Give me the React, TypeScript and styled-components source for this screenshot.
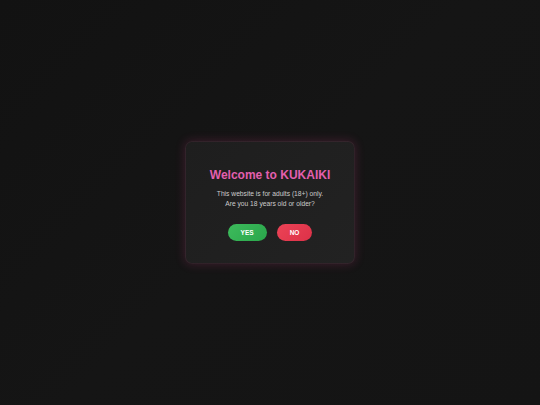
import React from "react";
import styled, { createGlobalStyle } from "styled-components";

const GlobalStyle = createGlobalStyle`
  html, body {
    margin: 0;
    padding: 0;
    height: 100%;
  }
  body {
    background: #131313;
    font-family: "Liberation Sans", Arial, sans-serif;
  }
  #root {
    height: 100%;
  }
`;

const Overlay = styled.div`
  display: flex;
  align-items: center;
  justify-content: center;
  width: 100%;
  height: 100%;
  background: linear-gradient(135deg, #121212 0%, #151515 50%, #141414 100%);
`;

const Modal = styled.div`
  box-sizing: border-box;
  width: 170px;
  padding: 26px 16px 22px;
  display: flex;
  flex-direction: column;
  align-items: center;
  text-align: center;
  border-radius: 7px;
  background: linear-gradient(135deg, #1e1e1e 0%, #222222 100%);
  border: 1px solid rgba(220, 70, 140, 0.1);
  box-shadow: 0 0 10px 1px rgba(220, 60, 140, 0.18);
`;

const Title = styled.h1`
  margin: 0;
  font-size: 12px;
  line-height: 14px;
  font-weight: 700;
  color: #e35fae;
`;

const Message = styled.p`
  margin: 7px 0 0;
  font-size: 6.7px;
  line-height: 10px;
  color: #cccccc;
`;

const Actions = styled.div`
  display: flex;
  gap: 10px;
  margin-top: 15px;
`;

const Choice = styled.button<{ $tone: "yes" | "no" }>`
  height: 17.5px;
  padding: 0 13px;
  border: none;
  border-radius: 999px;
  font-family: "Liberation Sans", Arial, sans-serif;
  font-size: 6.5px;
  font-weight: 700;
  color: #ffffff;
  cursor: pointer;
  background: ${(p) =>
    p.$tone === "yes"
      ? "linear-gradient(135deg, #3dbb5c, #2aa64b)"
      : "linear-gradient(135deg, #ec4356, #dc3148)"};
`;

export default function App() {
  return (
    <>
      <GlobalStyle />
      <Overlay>
        <Modal>
          <Title>Welcome to KUKAIKI</Title>
          <Message>
            This website is for adults (18+) only.
            <br />
            Are you 18 years old or older?
          </Message>
          <Actions>
            <Choice $tone="yes">YES</Choice>
            <Choice $tone="no">NO</Choice>
          </Actions>
        </Modal>
      </Overlay>
    </>
  );
}
